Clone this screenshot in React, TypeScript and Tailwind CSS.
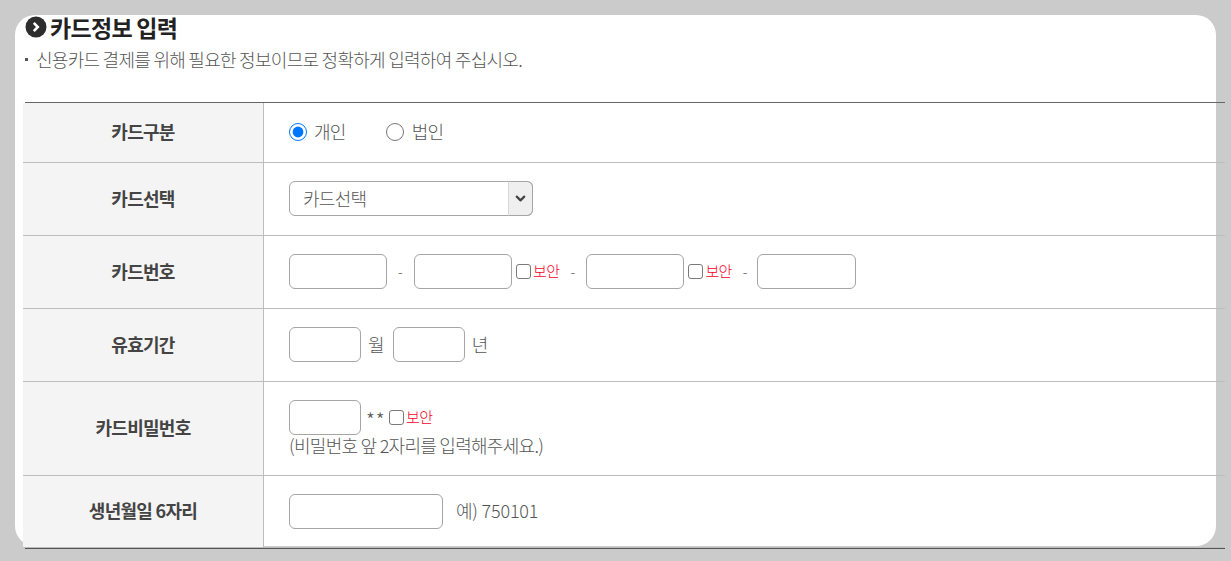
import React from 'react';
import { ChevronDown } from 'lucide-react';

const fontStack = 'font-["Noto_Sans_CJK_KR","Noto_Sans",sans-serif]';
const inputClass = 'h-[35px] rounded-[6px] border border-[#a5a5a5] bg-white outline-none';

const Row = ({ label, height, children }: { label: string; height: string; children: React.ReactNode }) => (
    <div className={`-ml-[2px] flex ${height} border-b border-[#bdbdbd]`}>
        <div className="flex w-[241px] shrink-0 items-center justify-center border-r border-[#bdbdbd] bg-[#f4f4f4] pb-[2px] text-[18px] font-bold tracking-[-0.72px] text-[#444]">
            {label}
        </div>
        <div className="flex min-w-0 flex-1 flex-col justify-center pb-[2px] pl-[25px]">{children}</div>
    </div>
);

const Secure = () => (
    <label className="flex items-center text-[15px] tracking-[-0.6px] text-[#f5001e]">
        <input type="checkbox" className="m-0 h-[15px] w-[15px] appearance-none rounded-[3px] border-[1.5px] border-[#7a7a7a] bg-white" />
        <span className="ml-[2px]">보안</span>
    </label>
);

const Dash = () => <span className="mx-[11px] w-[5px] text-[14px]">-</span>;

export default function App() {
    return (
        <div className={`h-[561px] overflow-hidden bg-[#cbcbcb] pl-[15px] pt-[15px] ${fontStack}`}>
            <div className="h-[531px] w-[1201px] rounded-[20px] bg-white pl-[10px]">
                <div className="w-[1200px]">
                    <h2 className="flex h-[24px] items-center text-[23px] font-bold leading-[24px] tracking-[-0.7px] text-[#222]">
                        <svg viewBox="0 0 22 22" className="mr-[3px] h-[22px] w-[22px] shrink-0">
                            <circle cx="11" cy="11" r="10.5" fill="#2d2d2d" />
                            <path d="M8.8 6.8 12.8 11l-4 4.2" fill="none" stroke="#fff" strokeWidth="2.6" />
                        </svg>
                        카드정보 입력
                    </h2>
                    <p className="mt-[8px] flex h-[24px] items-center text-[18px] font-light tracking-[-0.72px] text-[#555]">
                        <span className="mr-[8px] h-[3px] w-[3px] bg-[#555]" />
                        신용카드 결제를 위해 필요한 정보이므로 정확하게 입력하여 주십시오.
                    </p>
                    <div className="mt-[31px] border-y border-t-[#666] border-b-[#555] text-[18px] font-light tracking-[-0.72px] text-[#555]">
                        <Row label="카드구분" height="h-[60px]">
                            <div className="flex items-center">
                                <label className="flex items-center">
                                    <input type="radio" name="kind" defaultChecked className="m-0 h-[18px] w-[18px]" />
                                    <span className="ml-[7px]">개인</span>
                                </label>
                                <label className="ml-[40px] flex items-center">
                                    <input type="radio" name="kind" className="m-0 h-[18px] w-[18px]" />
                                    <span className="ml-[8px]">법인</span>
                                </label>
                            </div>
                        </Row>
                        <Row label="카드선택" height="h-[73px]">
                            <div className="relative h-[35px] w-[244px]">
                                <select className={`${inputClass} w-full appearance-none pl-[13px]`}>
                                    <option>카드선택</option>
                                </select>
                                <span className="absolute right-0 top-0 flex h-[35px] w-[25px] items-center justify-center rounded-r-[6px] border border-[#a5a5a5] border-l-[#d8d8d8] bg-[#efefef]">
                                    <ChevronDown size={15} strokeWidth={3.5} className="text-[#444]" />
                                </span>
                            </div>
                        </Row>
                        <Row label="카드번호" height="h-[73px]">
                            <div className="flex items-center">
                                <input className={`${inputClass} w-[98px]`} />
                                <Dash />
                                <input className={`${inputClass} w-[98px]`} />
                                <span className="ml-[4px]"><Secure /></span>
                                <Dash />
                                <input className={`${inputClass} w-[98px]`} />
                                <span className="ml-[4px]"><Secure /></span>
                                <span className="ml-[11px] mr-[9px] w-[5px] text-[14px]">-</span>
                                <input className={`${inputClass} w-[99px]`} />
                            </div>
                        </Row>
                        <Row label="유효기간" height="h-[73px]">
                            <div className="flex items-center">
                                <input className={`${inputClass} w-[72px]`} />
                                <span className="ml-[7px]">월</span>
                                <input className={`${inputClass} ml-[9px] w-[72px]`} />
                                <span className="ml-[7px]">년</span>
                            </div>
                        </Row>
                        <Row label="카드비밀번호" height="h-[94px]">
                            <div className="flex items-center">
                                <input className={`${inputClass} w-[72px]`} />
                                <span className="mx-[5px] w-[18px] translate-y-[2px] text-[20px] leading-[24px] tracking-[1px]">**</span>
                                <Secure />
                            </div>
                            <p className="leading-[20px]">(비밀번호 앞 2자리를 입력해주세요.)</p>
                        </Row>
                        <Row label="생년월일 6자리" height="h-[72px]">
                            <div className="flex items-center">
                                <input className={`${inputClass} mt-[2px] w-[154px]`} />
                                <span className="ml-[13px] tracking-[-0.2px]">예) 750101</span>
                            </div>
                        </Row>
                    </div>
                </div>
            </div>
        </div>
    );
}
